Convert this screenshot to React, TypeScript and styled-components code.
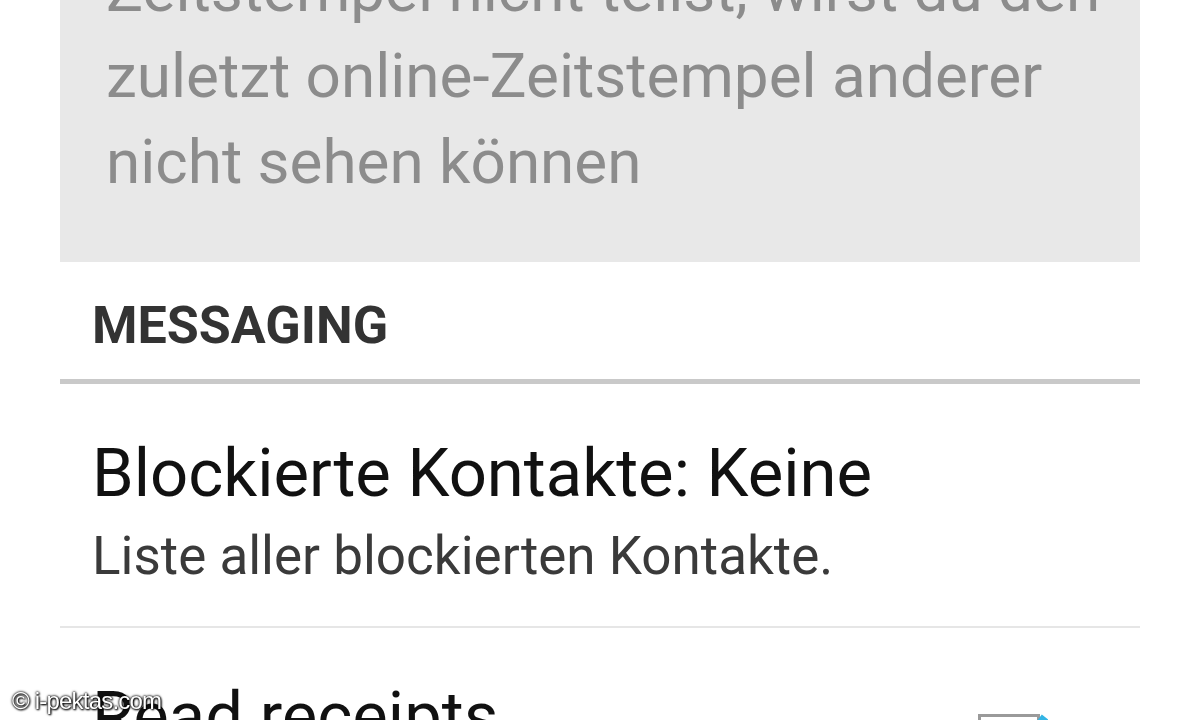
import React from 'react';
import styled, {createGlobalStyle} from "styled-components";

const GlobalStyle = createGlobalStyle`
  html, body {
    margin: 0;
    padding: 0;
    background: #ffffff;
    overflow: hidden;
  }
  body {
    font-family: Roboto, "Noto Sans", sans-serif;
  }
`

export default function App() {
    return (
        <>
            <GlobalStyle/>
            <Screen>
                <InfoBox>
                    <InfoText>
                        Zeitstempel nicht teilst, wirst du den<br/>
                        zuletzt online-Zeitstempel anderer<br/>
                        nicht sehen können
                    </InfoText>
                </InfoBox>
                <SectionHeader>Messaging</SectionHeader>
                <SectionDivider/>
                <PrefItem>
                    <PrefText>
                        <PrefTitle>Blockierte Kontakte: Keine</PrefTitle>
                        <PrefSummary>Liste aller blockierten Kontakte.</PrefSummary>
                    </PrefText>
                </PrefItem>
                <ItemDivider/>
                <PrefItem $last>
                    <PrefText>
                        <PrefTitle>Read receipts</PrefTitle>
                    </PrefText>
                    <CheckBox>
                        <svg width="70" height="70" viewBox="0 0 70 70">
                            <path d="M60 6 L34 40 L22 28" fill="none" stroke="#33b5e5" strokeWidth="8"/>
                        </svg>
                    </CheckBox>
                </PrefItem>
            </Screen>
            <Watermark>© i-pektas.com</Watermark>
        </>
    );
}

const Screen = styled.div`
    width: 1080px;
    margin: -69px auto 0;
    display: flex;
    flex-direction: column;
`
const InfoBox = styled.div`
    background: #e8e8e8;
    padding: 16px 40px 57px 46px;
`
const InfoText = styled.p`
    margin: 0;
    font-size: 62px;
    line-height: 86px;
    color: #8c8c8c;
    white-space: nowrap;
`
const SectionHeader = styled.div`
    padding: 34px 32px 23px;
    font-size: 52px;
    line-height: 60px;
    font-weight: 700;
    text-transform: uppercase;
    color: #333333;
`
const SectionDivider = styled.div`
    height: 5px;
    background: #c9c9c9;
`
const PrefItem = styled.div<{ $last?: boolean }>`
    display: flex;
    align-items: flex-start;
    justify-content: space-between;
    padding: ${p => p.$last ? '52px 100px 0 32px' : '53px 32px 40px'};
`
const PrefText = styled.div`
    display: flex;
    flex-direction: column;
    gap: 17px;
`
const PrefTitle = styled.div`
    font-size: 67px;
    line-height: 72px;
    color: #111111;
`
const PrefSummary = styled.div`
    font-size: 53px;
    line-height: 60px;
    color: #3a3a3a;
`
const ItemDivider = styled.div`
    height: 2px;
    background: #e6e6e6;
`
const CheckBox = styled.div`
    margin-top: 34px;
    width: 56px;
    height: 62px;
    border: 3px solid #9a9a9a;
    position: relative;

    svg {
        position: absolute;
        left: 4px;
        top: -6px;
    }
`
const Watermark = styled.div`
    position: fixed;
    left: 12px;
    top: 687px;
    font-family: "Liberation Sans", Arial, sans-serif;
    font-size: 24px;
    letter-spacing: -0.8px;
    color: #ffffff;
    text-shadow: 0 0 2px #000, 0 0 3px #000, 1px 1px 2px #000;
`
